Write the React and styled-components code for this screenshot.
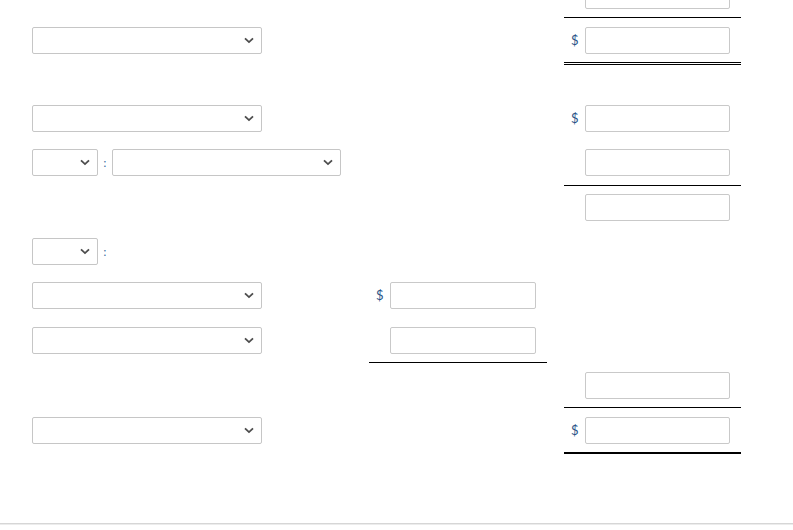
import React from "react";
import styled, { createGlobalStyle } from "styled-components";

const Global = createGlobalStyle`
  html, body { margin: 0; padding: 0; background: #fff; overflow: hidden; }
  body { font-family: Lato, "Liberation Sans", sans-serif; }
`;

const Page = styled.div`
  width: 793px;
  height: 530px;
  overflow: hidden;
  position: relative;
`;

const Sheet = styled.div`
  margin-top: -27px;
  padding-left: 32px;
  display: flex;
  flex-direction: column;
`;

const Row = styled.div`
  display: grid;
  grid-template-columns: 320px 178px 177px;
  column-gap: 17px;
  height: ${(p) => p.$h}px;
`;

const Spacer = styled.div`
  height: ${(p) => p.$h}px;
`;

const lineStyles = {
  none: "1px solid transparent",
  single: "1px solid #000",
  double: "3px double #000",
  thick: "2px solid #000",
  none3: "3px solid transparent",
  none2: "2px solid transparent",
};

const Cell = styled.div`
  box-sizing: border-box;
  display: flex;
  align-items: center;
  border-bottom: ${(p) => lineStyles[p.$line || "none"]};
`;

const AmountCell = styled(Cell)`
  padding-left: 7px;
`;

const Dollar = styled.span`
  width: 14px;
  font-size: 13px;
  color: #2b5487;
  line-height: 1;
`;

const Blank = styled.span`
  width: 14px;
`;

const Input = styled.div`
  box-sizing: border-box;
  width: ${(p) => p.$w || 145}px;
  height: 27px;
  border: 1px solid #c9c9c9;
  border-radius: 2px;
  background: #fff;
`;

const SelectBox = styled.div`
  box-sizing: border-box;
  width: ${(p) => p.$w}px;
  height: 27px;
  border: 1px solid #c6c6c6;
  border-radius: 2px;
  background: #fff;
  display: flex;
  align-items: center;
  justify-content: flex-end;
  padding-right: 7px;
`;

const Pair = styled.div`
  display: flex;
  align-items: center;
`;

const Colon = styled.span`
  width: 14px;
  text-align: center;
  font-size: 11px;
  color: #2b5f99;
  line-height: 1;
`;

const Footer = styled.div`
  position: absolute;
  left: 0;
  right: 0;
  top: 523px;
  height: 0;
  border-top: 1px solid #d6d6d6;
  border-bottom: 1px solid #ececec;
`;

const Chevron = () => (
  <svg width="10" height="7" viewBox="0 0 10 7" aria-hidden="true">
    <path d="M1 1.3 L5 5.1 L9 1.3" fill="none" stroke="#4d4d4d" strokeWidth="1.8" />
  </svg>
);

const Select = ({ w }) => (
  <SelectBox $w={w}>
    <Chevron />
  </SelectBox>
);

const Amount = ({ dollar, line, w }) => (
  <AmountCell $line={line}>
    {dollar ? <Dollar>$</Dollar> : <Blank />}
    <Input $w={w} />
  </AmountCell>
);

export default function App() {
  return (
    <Page>
      <Global />
      <Sheet>
        <Row $h={45}>
          <Cell />
          <Cell />
          <Amount line="single" />
        </Row>
        <Row $h={47}>
          <Cell $line="none3">
            <Select w={230} />
          </Cell>
          <Cell $line="none3" />
          <Amount dollar line="double" />
        </Row>
        <Spacer $h={32} />
        <Row $h={43}>
          <Cell>
            <Select w={230} />
          </Cell>
          <Cell />
          <Amount dollar />
        </Row>
        <Row $h={46}>
          <Cell>
            <Pair>
              <Select w={66} />
              <Colon>:</Colon>
              <Select w={229} />
            </Pair>
          </Cell>
          <Cell />
          <Amount line="single" />
        </Row>
        <Row $h={43}>
          <Cell />
          <Cell />
          <Amount />
        </Row>
        <Row $h={45}>
          <Cell>
            <Pair>
              <Select w={66} />
              <Colon>:</Colon>
            </Pair>
          </Cell>
          <Cell />
          <Cell />
        </Row>
        <Row $h={44}>
          <Cell>
            <Select w={230} />
          </Cell>
          <Amount dollar w={146} />
          <Cell />
        </Row>
        <Row $h={45}>
          <Cell>
            <Select w={230} />
          </Cell>
          <Amount line="single" w={146} />
          <Cell />
        </Row>
        <Row $h={45}>
          <Cell />
          <Cell />
          <Amount line="single" />
        </Row>
        <Row $h={46}>
          <Cell $line="none2">
            <Select w={230} />
          </Cell>
          <Cell $line="none2" />
          <Amount dollar line="thick" />
        </Row>
      </Sheet>
      <Footer />
    </Page>
  );
}
